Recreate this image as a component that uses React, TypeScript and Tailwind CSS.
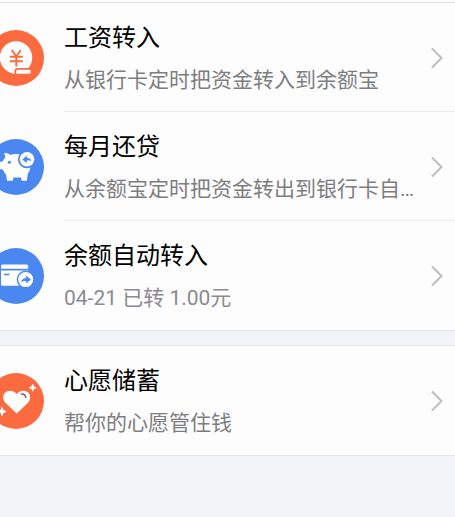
import type { ReactNode } from 'react';

type Item = {
  title: string;
  desc: string;
  icon: ReactNode;
  muted?: boolean;
};

const iconClass = 'w-14 h-14 -ml-3 shrink-0';

function SalaryIcon() {
  return (
    <svg viewBox="0 0 56 56" className={iconClass} aria-hidden="true">
      <circle cx="28" cy="28" r="28" fill="#fc6a3f" />
      <circle cx="28" cy="27.500" r="16.200" fill="#fff" />
      <path
        d="M23.800 20l4.500 6.500 4.500-6.500M21.800 26.700h13M21.800 31.300h13M28.300 26.500v10"
        fill="none"
        stroke="#fc6a3f"
        strokeWidth="1.900"
      />
      <path d="M46 38H29.500a3 3 0 0 0-3 3v4.500H46z" fill="#fc6a3f" />
      <rect x="28" y="39.800" width="14.800" height="4" rx="1.600" fill="#fff" />
    </svg>
  );
}

function PiggyIcon() {
  return (
    <svg viewBox="0 0 56 56" className={iconClass} aria-hidden="true">
      <circle cx="28" cy="28" r="28" fill="#4a87f1" />
      <path
        d="M16.300 14.200c2.200-.4 4.200.3 5.800 1.800 2-.7 4.200-.9 6.500-.9 8 0 14 4.500 14 11.300 0 3.200-1.200 6-2.800 8.200l-1 7.100h-5l-.8-3.200h-7.500l-.8 3.200h-5.600l-1.200-6.200c-1.300-1.200-2.100-2.800-2.800-4.700l-4.100-1v-6.600l3.800-1c.6-1.600 1.500-2.900 2.600-4z"
        fill="#fff"
      />
      <circle cx="21.400" cy="23.300" r="1.500" fill="#4a87f1" />
      <circle cx="39" cy="20.300" r="9" fill="#4a87f1" />
      <circle cx="39" cy="20.300" r="7.300" fill="#fff" />
      <path d="M34.300 20.400l4.600-4v2.500c2.500 0 4 1 4.700 3.300-1.300-.8-2.700-1-4.700-.8v2.700z" fill="#4a87f1" />
    </svg>
  );
}

function CardIcon() {
  return (
    <svg viewBox="0 0 56 56" className={iconClass} aria-hidden="true">
      <circle cx="28" cy="28" r="28" fill="#4a87f1" />
      <path d="M13 20.700v-2.700q0-1.500 1.500-1.500h24.200q1.500 0 1.500 1.500v2.700z" fill="#fff" />
      <path d="M13 22.500h27.200v15.200H14.500q-1.500 0-1.500-1.500z" fill="#fff" />
      <path d="M16 26.500h5.200" stroke="#4a87f1" strokeWidth="1.600" />
      <circle cx="37.700" cy="31.600" r="9" fill="#4a87f1" />
      <circle cx="37.700" cy="31.600" r="7.500" fill="#fff" />
      <path d="M43 31.500l-4.800-4v2.400c-2.800.1-4.700 1.600-5.300 4.400 1.500-1.200 3.200-1.500 5.300-1.300v2.500z" fill="#4a87f1" />
    </svg>
  );
}

function WishIcon() {
  return (
    <svg viewBox="0 0 56 56" className={iconClass} aria-hidden="true">
      <circle cx="28" cy="28" r="28" fill="#fc6a3f" />
      <path
        d="M28.700 40.500L17.400 29.800c-3-3.200-2.700-7.600-.2-10.200 2.800-2.800 7.800-2.800 11.500 1.300 3.700-4.100 8.700-4.100 11.500-1.300 2.500 2.600 2.800 7-.2 10.200z"
        fill="#fff"
      />
      <path d="M32.800 21.200c2.600-.9 4.900.8 5.200 3.700" fill="none" stroke="#a3475c" strokeWidth="1.400" />
      <path
        d="M44.700 11.200l1 2.500 2.500 1-2.500 1-1 2.500-1-2.500-2.500-1 2.500-1zM14 34.200l1.200 3.100 3.100 1.200-3.100 1.200-1.200 3.100-1.200-3.100-3.100-1.200 3.100-1.200z"
        fill="#fff"
        stroke="#fff"
        strokeWidth=".8"
      />
    </svg>
  );
}

const transfers: Item[] = [
  { title: '工资转入', desc: '从银行卡定时把资金转入到余额宝', icon: <SalaryIcon /> },
  { title: '每月还贷', desc: '从余额宝定时把资金转出到银行卡自…', icon: <PiggyIcon /> },
  { title: '余额自动转入', desc: '04-21 已转 1.00元', icon: <CardIcon />, muted: true },
];

const savings: Item[] = [{ title: '心愿储蓄', desc: '帮你的心愿管住钱', icon: <WishIcon /> }];

function Row({ item, last }: { item: Item; last: boolean }) {
  return (
    <li>
      <button type="button" className="flex w-full items-center gap-5 text-left cursor-pointer">
        {item.icon}
        <span className={`flex flex-1 min-w-0 items-center pt-[17px] pr-3 ${last ? 'pb-4' : 'border-b border-[#ececee] pb-[15px]'}`}>
          <span className="flex flex-col flex-1 min-w-0 gap-2">
            <span className="text-2xl leading-9 text-black">{item.title}</span>
            <span className={`text-[21px] leading-8 whitespace-nowrap ${item.muted ? 'text-[#8b8a8f]' : 'text-[#7d7d7f]'}`}>
              {item.desc}
            </span>
          </span>
          <svg viewBox="0 0 12 22" className="w-3 h-[22px] shrink-0" fill="none" aria-hidden="true">
            <path d="M1 1.500L10.500 11 1 20.500" stroke="#bdbdbf" strokeWidth="2" />
          </svg>
        </span>
      </button>
    </li>
  );
}

function Section({ items }: { items: Item[] }) {
  return (
    <ul className="bg-[#fdfdfe] border-b border-[#e3e4ea]">
      {items.map((item, i) => (
        <Row key={item.title} item={item} last={i === items.length - 1} />
      ))}
    </ul>
  );
}

export default function App() {
  return (
    <main className="min-h-screen overflow-hidden bg-[#f2f3f8] font-[Roboto,'Noto_Sans_CJK_SC',sans-serif]">
      <div className="h-[3px] bg-[#fdfdfe] border-b border-[#dededf]" />
      <Section items={transfers} />
      <div className="h-[15px] bg-[#f1f3f7] border-b border-[#e9eaee]" />
      <Section items={savings} />
    </main>
  );
}
